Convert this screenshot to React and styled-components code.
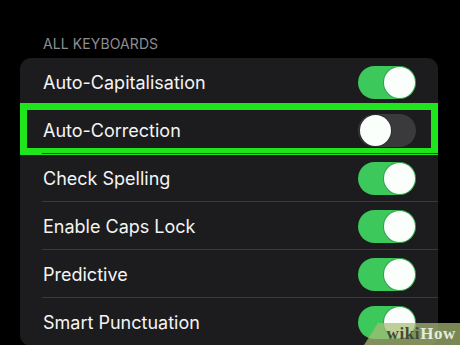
import React from 'react';
import styled, { createGlobalStyle } from 'styled-components';

const GlobalStyle = createGlobalStyle`
  html, body {
    margin: 0;
    padding: 0;
    background: #000;
    overflow: hidden;
  }
  body {
    font-family: Inter, "Liberation Sans", sans-serif;
    -webkit-font-smoothing: antialiased;
  }
`;

const Screen = styled.div`
  position: relative;
  width: 460px;
  height: 345px;
  overflow: hidden;
  background: #000;
  padding: 0 22px 0 20px;
  box-sizing: border-box;
`;

const SectionHeader = styled.div`
  padding: 35px 0 0 23px;
  height: 23px;
  font-size: 14px;
  line-height: 17px;
  color: #8d8d92;
  letter-spacing: 0.1px;
`;

const Card = styled.div`
  background: #1c1c1e;
  border-radius: 11px;
`;

const Row = styled.div`
  position: relative;
  height: 48px;
  display: flex;
  align-items: center;
  justify-content: space-between;
  padding: 0 22px 0 23px;
  &:not(:first-child)::before {
    content: '';
    position: absolute;
    top: -1px;
    left: 22px;
    right: 0;
    height: 1px;
    background: #38383a;
  }
`;

const Label = styled.span`
  font-size: 18px;
  color: #f4f4f4;
`;

const Track = styled.div`
  position: relative;
  width: 58px;
  height: 33px;
  border-radius: 17px;
  background: ${(p) => (p.$on ? '#3cc85b' : '#3a3a3c')};
`;

const Knob = styled.div`
  position: absolute;
  top: 1px;
  left: ${(p) => (p.$on ? '26px' : '2px')};
  width: 31px;
  height: 31px;
  border-radius: 50%;
  background: #fbfffb;
  box-shadow: 0 0 0 1px ${(p) => (p.$on ? 'rgba(40,120,60,0.5)' : 'rgba(0,0,0,0.25)')};
`;

const Highlight = styled.div`
  position: absolute;
  top: -3px;
  bottom: -1px;
  left: 0;
  right: 0;
  border: 7px solid #1ee51c;
  pointer-events: none;
`;

const Watermark = styled.div`
  position: absolute;
  right: 0;
  bottom: 0;
  width: 96px;
  height: 22px;
  background: rgba(168, 188, 118, 0.72);
  clip-path: polygon(14px 0, 100% 0, 100% 100%, 0 100%);
  display: flex;
  align-items: flex-end;
  justify-content: flex-end;
  padding: 0 4px 3px 0;
  box-sizing: border-box;
  font-family: "Liberation Serif", serif;
  font-weight: bold;
  font-size: 17px;
  line-height: 17px;
  letter-spacing: 0.6px;
`;

const Wiki = styled.span`
  color: #414b34;
`;

const How = styled.span`
  color: #e6ebdc;
`;

const Toggle = ({ on }) => (
  <Track $on={on}>
    <Knob $on={on} />
  </Track>
);

const settings = [
  { label: 'Auto-Capitalisation', on: true },
  { label: 'Auto-Correction', on: false, highlight: true },
  { label: 'Check Spelling', on: true },
  { label: 'Enable Caps Lock', on: true },
  { label: 'Predictive', on: true },
  { label: 'Smart Punctuation', on: true },
];

const App = () => {
  return (
    <>
      <GlobalStyle />
      <Screen>
        <SectionHeader>ALL KEYBOARDS</SectionHeader>
        <Card>
          {settings.map((s) => (
            <Row key={s.label}>
              <Label>{s.label}</Label>
              <Toggle on={s.on} />
              {s.highlight && <Highlight />}
            </Row>
          ))}
        </Card>
        <Watermark>
          <Wiki>wiki</Wiki>
          <How>How</How>
        </Watermark>
      </Screen>
    </>
  );
};

export default App;
